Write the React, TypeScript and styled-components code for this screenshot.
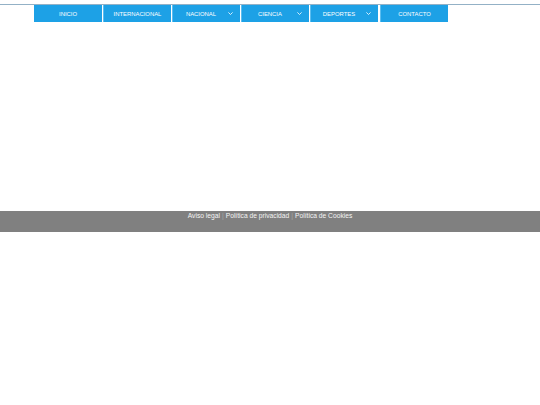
import React from 'react';
import styled, { createGlobalStyle } from 'styled-components';

const GlobalStyle = createGlobalStyle`
    html, body {
        margin: 0;
        padding: 0;
        background: #ffffff;
        font-family: "Liberation Sans", Arial, sans-serif;
    }
`;

const Page = styled.div`
    display: flex;
    flex-direction: column;
    width: 540px;
`;

const Header = styled.header`
    margin-top: 4px;
    border-top: 1px solid #93b1c6;
    padding-left: 34px;
`;

const Menu = styled.ul`
    display: flex;
    list-style: none;
    margin: 0;
    padding: 0;
    gap: 1px;
`;

const MenuItem = styled.li<{ $drop?: boolean }>`
    position: relative;
    display: flex;
    align-items: center;
    justify-content: center;
    box-sizing: border-box;
    width: 68px;
    height: 17px;
    background: #1da1e6;
    border-left: 1px solid #5cbdf0;
    color: #ffffff;
    font-size: 5.9px;
    text-transform: uppercase;
    padding-right: ${p => (p.$drop ? '11px' : '0')};
    &:first-child {
        border-left: none;
    }
    &:last-child {
        margin-left: 1px;
    }
`;

const Chevron = styled.svg`
    position: absolute;
    right: 7px;
    top: 7px;
    width: 5px;
    height: 3px;
`;

const Content = styled.main`
    height: 189px;
`;

const Footer = styled.footer`
    display: flex;
    justify-content: center;
    align-items: flex-start;
    gap: 2px;
    height: 20px;
    padding-top: 1px;
    background: #808080;
    color: #f4f4f4;
    font-size: 6.7px;
`;

const Sep = styled.span`
    color: #a8a8a8;
`;

const items = [
    { label: 'Inicio' },
    { label: 'Internacional' },
    { label: 'Nacional', drop: true },
    { label: 'Ciencia', drop: true },
    { label: 'Deportes', drop: true },
    { label: 'Contacto' },
];

const App: React.FC = () => {
    return (
        <>
            <GlobalStyle />
            <Page>
                <Header>
                    <Menu>
                        {items.map(item => (
                            <MenuItem key={item.label} $drop={item.drop}>
                                {item.label}
                                {item.drop && (
                                    <Chevron viewBox="0 0 5 3">
                                        <path d="M0.4 0.4 L2.5 2.5 L4.6 0.4" fill="none" stroke="#ffffff" strokeWidth="0.8" />
                                    </Chevron>
                                )}
                            </MenuItem>
                        ))}
                    </Menu>
                </Header>
                <Content />
                <Footer>
                    <span>Aviso legal</span>
                    <Sep>|</Sep>
                    <span>Política de privacidad</span>
                    <Sep>|</Sep>
                    <span>Política de Cookies</span>
                </Footer>
            </Page>
        </>
    );
};

export default App;
